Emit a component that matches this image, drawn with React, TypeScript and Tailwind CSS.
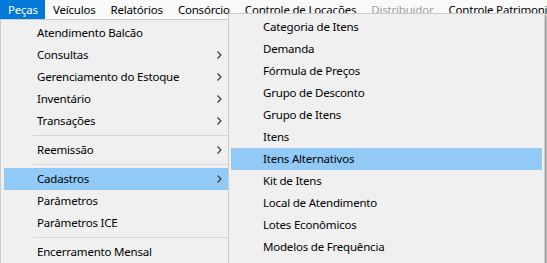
import React from 'react';

const topItems = [
  { label: 'Peças', active: true },
  { label: 'Veículos' },
  { label: 'Relatórios' },
  { label: 'Consórcio' },
  { label: 'Controle de Locações' },
  { label: 'Distribuidor', disabled: true },
  { label: 'Controle Patrimonial' },
];

type Entry = { label?: string; sub?: boolean; active?: boolean; sep?: boolean };

const pecas: Entry[] = [
  { label: 'Atendimento Balcão' },
  { label: 'Consultas', sub: true },
  { label: 'Gerenciamento do Estoque', sub: true },
  { label: 'Inventário', sub: true },
  { label: 'Transações', sub: true },
  { sep: true },
  { label: 'Reemissão', sub: true },
  { sep: true },
  { label: 'Cadastros', sub: true, active: true },
  { label: 'Parâmetros' },
  { label: 'Parâmetros ICE' },
  { sep: true },
  { label: 'Encerramento Mensal' },
];

const cadastros = [
  'Categoria de Itens',
  'Demanda',
  'Fórmula de Preços',
  'Grupo de Desconto',
  'Grupo de Itens',
  'Itens',
  'Itens Alternativos',
  'Kit de Itens',
  'Local de Atendimento',
  'Lotes Econômicos',
  'Modelos de Frequência',
];

const Chevron = () => (
  <svg width="5" height="8" viewBox="0 0 5 8" className="shrink-0">
    <path d="M0.5 0.5 L4 4 L0.5 7.5" fill="none" stroke="#333" strokeWidth="1.1" />
  </svg>
);

export default function App() {
  return (
    <div
      className="relative w-[547px] h-[263px] overflow-hidden bg-[#f0f0f0] text-[11.5px] tracking-[-0.2px] text-black"
      style={{ fontFamily: '"Noto Sans", "Open Sans", sans-serif' }}
    >
      {/* menu bar */}
      <div className="flex h-[19px] bg-[#fafafa] whitespace-nowrap">
        {topItems.map((t) => (
          <div
            key={t.label}
            className={`flex items-center pl-[8px] pr-[7px] leading-none ${
              t.active ? 'bg-[#0078d7] text-white' : t.disabled ? 'text-[#a0a0a0]' : ''
            }`}
          >
            {t.label}
          </div>
        ))}
      </div>

      {/* Peças dropdown */}
      <div className="absolute left-0 top-[19px] w-[229px] border border-[#cccccc] bg-[#f0f0f0] pt-[2px] pl-[3px]">
        {pecas.map((e, i) =>
          e.sep ? (
            <div key={i} className="h-[7px] flex items-center pl-[29px]">
              <div className="h-px w-full bg-[#d7d7d7]" />
            </div>
          ) : (
            <div
              key={i}
              className={`flex items-center h-[22px] pl-[33px] pr-[6px] ${e.active ? 'bg-[#91c9f7]' : ''}`}
            >
              <span className="flex-1 whitespace-nowrap">{e.label}</span>
              {e.sub && <Chevron />}
            </div>
          )
        )}
      </div>

      {/* Cadastros submenu */}
      <div className="absolute left-[228px] top-[13px] w-[317px] h-[260px] border border-[#cccccc] bg-[#f0f0f0] pt-[2px] px-[2px] shadow-[2px_2px_2px_rgba(0,0,0,0.35)]">
        {cadastros.map((c) => (
          <div
            key={c}
            className={`flex items-center h-[22px] pl-[32px] whitespace-nowrap ${
              c === 'Itens Alternativos' ? 'bg-[#91c9f7]' : ''
            }`}
          >
            {c}
          </div>
        ))}
      </div>
    </div>
  );
}
